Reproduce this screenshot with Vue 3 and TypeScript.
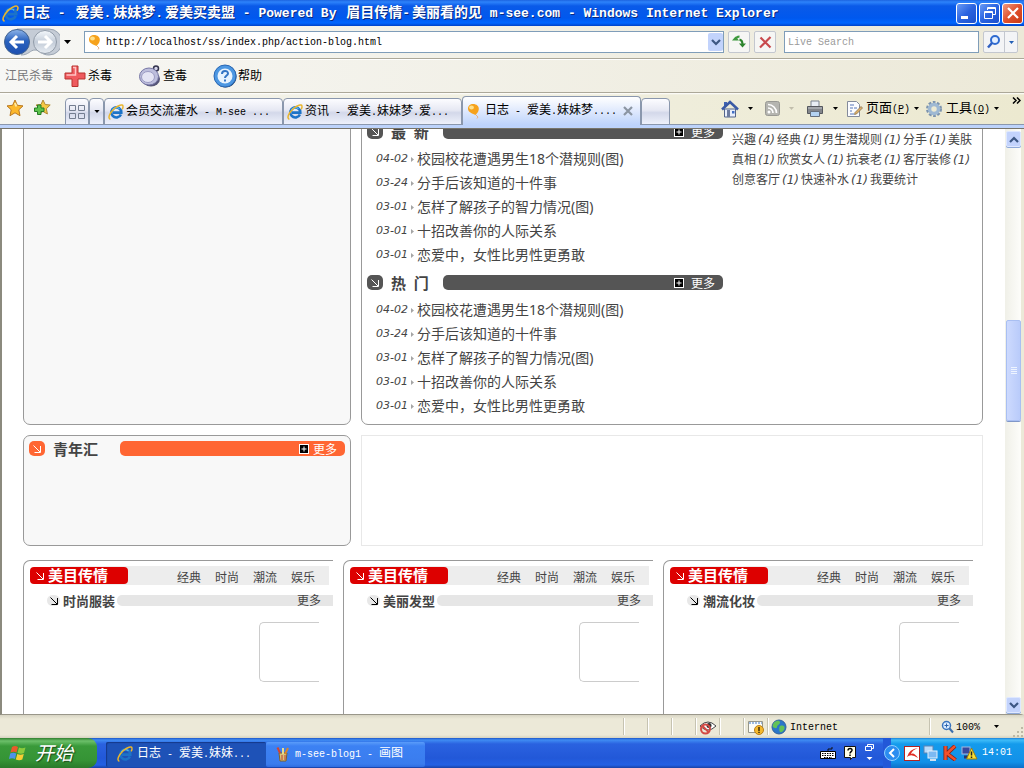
<script setup lang="ts">
import { h, ref } from 'vue'

// Splits mixed text so that Latin runs get their own monospaced face.
const Mixed = (props: { text: string }) =>
  props.text
    .split(/([\x20-\x7e]+)/)
    .filter((part) => part.length > 0)
    .map((part) => (/^[\x20-\x7e]/.test(part) ? h('span', { class: 'latin' }, part) : part))
Mixed.props = ['text']

interface Post {
  date: string
  title: string
}
interface Tag {
  name: string
  count?: number
}

const address = ref('http://localhost/ss/index.php/action-blog.html')
const query = ref('')
const title = '日志 - 爱美.妹妹梦.爱美买卖盟 - Powered By 眉目传情-美丽看的见 m-see.com - Windows Internet Explorer'

const posts: Post[] = [
  { date: '04-02', title: '校园校花遭遇男生18个潜规则(图)' },
  { date: '03-24', title: '分手后该知道的十件事' },
  { date: '03-01', title: '怎样了解孩子的智力情况(图)' },
  { date: '03-01', title: '十招改善你的人际关系' },
  { date: '03-01', title: '恋爱中，女性比男性更勇敢' },
]
const sections = [
  { name: '最  新', posts },
  { name: '热  门', posts },
]
const tags: Tag[] = [
  { name: '兴趣', count: 4 },
  { name: '经典', count: 1 },
  { name: '男生潜规则', count: 1 },
  { name: '分手', count: 1 },
  { name: '美肤真相', count: 1 },
  { name: '欣赏女人', count: 1 },
  { name: '抗衰老', count: 1 },
  { name: '客厅装修', count: 1 },
  { name: '创意客厅', count: 1 },
  { name: '快速补水', count: 1 },
  { name: '我要统计' },
]
const cards = ['时尚服装', '美丽发型', '潮流化妆']
const links = ['经典', '时尚', '潮流', '娱乐']
</script>

<template>
  <div class="window">
    <svg class="defs" width="0" height="0" aria-hidden="true">
      <defs>
        <linearGradient id="blueBall" x1="0" y1="0" x2="0" y2="1">
          <stop offset="0" stop-color="#8fb6ea" />
          <stop offset=".45" stop-color="#2a62be" />
          <stop offset="1" stop-color="#1d4fb0" />
        </linearGradient>
        <linearGradient id="greyBall" x1="0" y1="0" x2="0" y2="1">
          <stop offset="0" stop-color="#f4f8fc" />
          <stop offset=".5" stop-color="#c3ccd8" />
          <stop offset="1" stop-color="#e8edf3" />
        </linearGradient>
      </defs>
      <symbol id="ie" viewBox="0 0 16 16">
        <path d="M12.9 10.4A5 5 0 1 1 13.3 8.6H5" fill="none" stroke="#1c73c8" stroke-width="2.6" />
        <path d="M4.2 6.2A4.6 4.6 0 0 1 11.5 4.9" fill="none" stroke="#58b4f0" stroke-width="1.2" />
        <path d="M2.4 15.2C-.6 14.6 1.5 9 6.2 4.8 10.4 1.1 14.6-.2 15 2.2c.2 1-.3 2.200-.9 3.100" fill="none" stroke="#e9b52d" stroke-width="1.5" />
      </symbol>
      <symbol id="balloon" viewBox="0 0 14 16">
        <path d="M6 1c3.600 0 6 2.200 5.800 5.200C11.600 9 9.500 10.500 8.500 12 6 11 1 9.500 1 5.800 1 3 3.200 1 6 1z" fill="#f6a21c" />
        <ellipse cx="4.500" cy="4.500" rx="2.400" ry="2" fill="#ffe08a" />
        <path d="M9 12l2 2-1 1.500" stroke="#e7b183" fill="none" />
      </symbol>
      <symbol id="down" viewBox="0 0 7 4"><path d="M0 0h7L3.500 4z" fill="currentColor" /></symbol>
      <symbol id="diag" viewBox="0 0 8 8"><path d="M.5.5l6.500 6.500M7.500 1v6.500H1.500" fill="none" stroke="currentColor" /></symbol>
      <symbol id="chev" viewBox="0 0 10 7"><path d="M1 1l4 4 4-4" fill="none" stroke="#3d5783" stroke-width="2.200" /></symbol>
      <symbol id="plus" viewBox="0 0 10 10">
        <rect x=".5" y=".5" width="9" height="9" fill="#000" stroke="#fff" />
        <path d="M5 2.500v5M2.500 5h5" stroke="#fff" />
      </symbol>
    </svg>

    <header class="titlebar">
      <svg width="17" height="17"><use href="#ie" /></svg>
      <h1><Mixed :text="title" /></h1>
      <div class="winbtns">
        <button aria-label="Minimize"><svg width="18" height="18"><path d="M3 13.500h7" stroke="#fff" stroke-width="3" /></svg></button>
        <button aria-label="Restore">
          <svg width="18" height="18"><path d="M6.500 6V3.500h8v7H12M6 4.500h9M3.500 7.500h8v7h-8zM3 8.500h9" fill="none" stroke="#fff" /></svg>
        </button>
        <button class="close" aria-label="Close"><svg width="18" height="18"><path d="M4 4l10 10M14 4L4 14" stroke="#fff" stroke-width="2.200" /></svg></button>
      </div>
    </header>

    <div class="nav">
      <button class="backfwd" aria-label="Back and forward">
        <svg width="56" height="28">
          <path d="M13 1h32a13 13 0 0 1 0 26c-8 0-9-5-14-5s-6 5-14 5" fill="#c5ccd6" stroke="#9ba5b2" />
          <circle cx="13" cy="14" r="12.500" fill="url(#blueBall)" stroke="#40618f" />
          <path d="M20 14H8M13 8l-6 6 6 6" fill="none" stroke="#fff" stroke-width="3" />
          <circle cx="41" cy="14" r="11.500" fill="url(#greyBall)" stroke="#919ba8" />
          <path d="M34 14h12M41 8l6 6-6 6" fill="none" stroke="#fff" stroke-width="3" />
        </svg>
      </button>
      <button class="hist" aria-label="Recent pages"><svg width="7" height="4"><use href="#down" /></svg></button>
      <div class="address">
        <svg width="14" height="16"><use href="#balloon" /></svg>
        <input v-model="address" type="text" aria-label="Address" />
        <button aria-label="Show addresses"><svg width="10" height="7"><use href="#chev" /></svg></button>
      </div>
      <button class="sq" aria-label="Refresh">
        <svg width="16" height="16"><path d="M4.500 11V5" stroke="#3f9a3f" stroke-width="0" /><path d="M1 6.500h7L4.500 2.500z" fill="#3f9a3f" /><path d="M4.500 6C5 3.500 6.500 2.500 8.500 2.500" fill="none" stroke="#3f9a3f" stroke-width="2" /><path d="M8 9.500h7l-3.500 4z" fill="#2c842c" /><path d="M11.500 10c0-2.500-1-4-3-4.500" fill="none" stroke="#2c842c" stroke-width="2" /></svg>
      </button>
      <button class="sq" aria-label="Stop"><svg width="16" height="16"><path d="M3.500 3.500l10 10M13.500 3L3 13.500" stroke="#c8494d" stroke-width="2.200" /></svg></button>
      <input v-model="query" class="search" type="text" placeholder="Live Search" aria-label="Live Search" />
      <div class="go">
        <button aria-label="Search"><svg width="16" height="16"><circle cx="9" cy="6" r="4" fill="#e5f0ff" stroke="#2f6bd0" stroke-width="2" /><path d="M6 9l-4 4.500" stroke="#2f5fc0" stroke-width="2.500" /></svg></button>
        <button class="narrow" aria-label="Search options"><svg width="5" height="3" color="#225fb5"><use href="#down" /></svg></button>
      </div>
    </div>

    <div class="antivirus">
      <span class="brand">江民杀毒</span>
      <button class="av">
        <svg width="24" height="24"><path d="M9 2h6v7h7v6h-7v7.500H9V15H2V9h7z" fill="#ee5a5e" stroke="#b8322f" /><path d="M10 3.500h2.500V11H3.500" fill="none" stroke="#ffc3c3" stroke-width="1.500" /></svg>杀毒
      </button>
      <button class="av">
        <svg width="24" height="24"><ellipse cx="13" cy="15" rx="9" ry="7.500" fill="#555577" /><circle cx="18" cy="4.500" r="2.500" fill="#d5d5ea" stroke="#33334d" stroke-width="1.500" /><ellipse cx="11" cy="12.500" rx="9.500" ry="8.500" fill="#bdbedc" stroke="#7676a5" /><ellipse cx="10" cy="13" rx="6.500" ry="5.500" fill="#e4e4f4" stroke="#9c9cc4" /></svg>查毒
      </button>
      <button class="av">
        <svg width="24" height="24"><circle cx="12.500" cy="12.500" r="11" fill="#17345d" /><circle cx="12" cy="12" r="11" fill="#4c97e2" stroke="#2a68b5" /><circle cx="12" cy="12" r="7.500" fill="#e7f3ff" /><path d="M9 10c0-4 6-4 6-.5 0 2-3 2-3 4.500M12 15.500v2" fill="none" stroke="#3475c5" stroke-width="2" /></svg>帮助
      </button>
    </div>

    <div class="tabrow">
      <button class="star" aria-label="Favorites"><svg width="18" height="18"><path d="M9 1l2.400 5.300 5.600.6-4.200 3.900 1.200 5.900L9 13.800l-5 2.900 1.200-5.900L1 6.900l5.600-.6z" fill="#fcb82c" stroke="#b97820" /><path d="M9 4l1.300 3.500" stroke="#ffe9a0" stroke-width="2" /></svg></button>
      <button class="star" aria-label="Add favorite"><svg width="18" height="18"><path d="M10 1l2.200 4.500 5 .5-3.800 3.700 1 5.300-4.400-2.500-4.500 2.500 1-5.300L3 6l5-.5z" fill="#f6c843" stroke="#b08a35" /><path d="M4.500 6h3.500v3h3v3.500H8v3H4.500v-3h-3V9h3z" fill="#5cc34c" stroke="#267c25" /></svg></button>
      <div class="tabs">
        <button class="tab quick" aria-label="Quick tabs"><svg width="16" height="14"><path d="M.5.5h6v5h-6zM9.500.5h6v5h-6zM.5 8.500h6v5h-6zM9.500 8.500h6v5h-6z" fill="none" stroke="#737d90" /></svg></button>
        <button class="tab list" aria-label="Tab list"><svg width="6" height="3"><use href="#down" /></svg></button>
        <button class="tab page"><svg width="16" height="16"><use href="#ie" /></svg><span><Mixed text="会员交流灌水 - M-see ..." /></span></button>
        <button class="tab page"><svg width="16" height="16"><use href="#ie" /></svg><span><Mixed text="资讯 - 爱美.妹妹梦.爱..." /></span></button>
        <button class="tab page active">
          <svg width="14" height="16"><use href="#balloon" /></svg><span><Mixed text="日志 - 爱美.妹妹梦...." /></span>
          <svg class="x" width="10" height="10"><path d="M1 1l8 8M9 1L1 9" stroke="#8b95a2" stroke-width="2.200" /></svg>
        </button>
        <button class="tab new" aria-label="New tab"></button>
      </div>
      <div class="tools">
        <button aria-label="Home"><svg width="18" height="18"><path d="M3.500 9h11v8h-11z" fill="#e8eefb" stroke="#53648b" /><path d="M3 2h3v4H3z" fill="#4164b2" /><path d="M1 9.500L9 2l8 7.500" fill="none" stroke="#3a5aa5" stroke-width="2.500" /><path d="M6 10h3v7H6z" fill="#6c7b9f" /><path d="M11 11h2.500v2.500H11z" fill="#416ec4" /></svg></button>
        <svg class="dd" width="5" height="3"><use href="#down" /></svg>
        <button class="rss" aria-label="Feeds"><svg width="15" height="15"><rect x=".5" y=".5" width="14" height="14" rx="2" fill="#b5b5b0" stroke="#999994" /><circle cx="4" cy="11" r="1.500" fill="#fff" /><path d="M3 7a5 5 0 0 1 5 5M3 3.500A8.500 8.500 0 0 1 11.500 12" fill="none" stroke="#fff" stroke-width="1.700" /></svg></button>
        <svg class="dd dim" width="5" height="3"><use href="#down" /></svg>
        <button class="print" aria-label="Print"><svg width="18" height="18"><path d="M5 1h8v6H5z" fill="#e9eef5" stroke="#7b8290" /><path d="M1.500 6.500h15v7h-15z" fill="#83868c" stroke="#55585e" /><path d="M2 8h14" stroke="#c4c7cc" /><path d="M4.500 11.500h9v5h-9z" fill="#b4d3f2" stroke="#66707e" /></svg></button>
        <svg class="dd" width="5" height="3"><use href="#down" /></svg>
        <button class="word"><svg width="17" height="18"><path d="M1.500 1.500h9l3 3v12h-12z" fill="#fbfcff" stroke="#848b9b" /><path d="M4 5h4M4 8h3M4 11h2M8 8h3M4 14h4" stroke="#5777b8" /><path d="M9 12.500L15 6.500l1.500 1.500L10.500 14l-2 .5z" fill="#dfb068" stroke="#7b6746" stroke-width=".7" /></svg><span>页面<span class="latin">(<u>P</u>)</span></span></button>
        <svg class="dd" width="5" height="3"><use href="#down" /></svg>
        <button class="word gear"><svg width="17" height="18"><circle cx="8" cy="9" r="6.500" fill="none" stroke="#7c93ad" stroke-width="3" stroke-dasharray="2.600 1.500" /><circle cx="8" cy="9" r="4.500" fill="none" stroke="#9fb9d3" stroke-width="3.500" /></svg><span>工具<span class="latin">(<u>O</u>)</span></span></button>
        <svg class="dd" width="5" height="3"><use href="#down" /></svg>
        <button class="more" aria-label="More commands"><svg width="9" height="7"><path d="M1 .5l3 3-3 3M5 .5l3 3-3 3" fill="none" stroke="#000" stroke-width="1.500" /></svg></button>
      </div>
    </div>

    <div class="view">
      <main class="page-body">
        <div class="row top">
          <section class="panel soft"></section>
          <section class="panel main">
            <div class="lists">
              <template v-for="s in sections" :key="s.name">
                <div class="head">
                  <span class="badge"><svg width="8" height="8"><use href="#diag" /></svg></span>
                  <h2>{{ s.name }}</h2>
                  <div class="bar"><svg width="10" height="10"><use href="#plus" /></svg><a href="#">更多</a></div>
                </div>
                <ul>
                  <li v-for="p in s.posts" :key="p.title">
                    <i>{{ p.date }}</i><svg width="3" height="5"><path d="M0 0l3 2.500L0 5z" fill="#a5a5a5" /></svg><a href="#">{{ p.title }}</a>
                  </li>
                </ul>
              </template>
            </div>
            <p class="tags"><template v-for="t in tags" :key="t.name"><a href="#">{{ t.name }}</a><em v-if="t.count">({{ t.count }})</em></template></p>
          </section>
        </div>

        <div class="row youth">
          <section class="panel soft">
            <div class="head orange">
              <span class="badge"><svg width="8" height="8"><use href="#diag" /></svg></span>
              <h2>青年汇</h2>
              <div class="bar"><svg width="10" height="10"><use href="#plus" /></svg><a href="#">更多</a></div>
            </div>
          </section>
          <section class="blank"></section>
        </div>

        <div class="cards">
          <section v-for="c in cards" :key="c" class="card">
            <div class="chead">
              <h2><svg width="8" height="8"><use href="#diag" /></svg>美目传情</h2>
              <nav><a v-for="l in links" :key="l" href="#">{{ l }}</a></nav>
            </div>
            <div class="sub">
              <span class="dot"><svg width="8" height="8"><use href="#diag" /></svg></span>
              <h3>{{ c }}</h3>
              <div class="strip"><a href="#">更多</a></div>
            </div>
            <div class="thumbbox"></div>
          </section>
        </div>
      </main>
      <div class="scroll">
        <button aria-label="Scroll up"><svg class="flip" width="10" height="7"><use href="#chev" /></svg></button>
        <div class="above"></div>
        <div class="grab"><svg width="6" height="8"><path d="M0 .5h6M0 2.500h6M0 4.500h6M0 6.500h6" stroke="#eef4ff" /></svg></div>
        <div class="below"></div>
        <button aria-label="Scroll down"><svg width="10" height="7"><use href="#chev" /></svg></button>
      </div>
    </div>

    <footer class="status">
      <span class="cell"></span><span class="cell"></span><span class="cell"></span>
      <span class="cell"><svg width="18" height="16"><path d="M1 7q8-8 16 0-8 8-16 0z" fill="#fff" stroke="#444" /><circle cx="10" cy="6.500" r="2.500" fill="#333" /><circle cx="6.500" cy="10" r="4.500" fill="none" stroke="#d44a45" stroke-width="2" /><path d="M3.500 7l6 6" stroke="#d44a45" stroke-width="2" /></svg></span>
      <span class="cell"></span>
      <span class="cell"><svg width="16" height="16"><path d="M.5 2.500h14v11H.5z" fill="#fdfdf8" stroke="#97978b" /><path d="M1 4h13" stroke="#9ebbe2" stroke-width="2" stroke-dasharray="2 1" /><circle cx="11" cy="11" r="4.500" fill="#f4b92d" stroke="#bb7f18" /><path d="M11 8v4M11 12.800V14" stroke="#3f2a05" stroke-width="1.500" /></svg></span>
      <span class="cell zone"><svg width="16" height="16"><circle cx="8" cy="8" r="7" fill="#2b76c9" stroke="#31639b" /><path d="M3 3.500C6 1 9 1.500 9 3.500S6 6 6 8s-3 1-4 0 0-3 1-4.500zM9 7c3-1 5 0 4.500 2.500S10 14 9 13s-1-5 0-6z" fill="#64c257" /></svg><span class="latin">Internet</span></span>
      <span class="cell zoomlevel"><svg width="13" height="14"><circle cx="5.500" cy="5.500" r="4" fill="#d9ebff" stroke="#3a74bd" stroke-width="1.500" /><path d="M3.500 5.500h4M5.500 3.500v4" stroke="#2d65af" /><path d="M8.500 8.500l3.500 4" stroke="#3b6ead" stroke-width="2" /></svg><span class="latin">100%</span><svg class="tri" width="5" height="3"><use href="#down" /></svg></span>
      <svg class="grip" width="12" height="12"><path d="M9 1h2v2H9zM9 5h2v2H9zM5 5h2v2H5zM9 9h2v2H9zM5 9h2v2H5zM1 9h2v2H1z" fill="#bdb9a5" /></svg>
    </footer>

    <div class="taskbar">
      <button class="start">
        <svg width="19" height="18"><path d="M3 3q3-2 6 0L7.500 8.500Q5 7 1.500 8.500z" fill="#ea5a2b" /><path d="M10 3.500q3 1.500 6.500 0L15 9q-3 1.500-6.500 0z" fill="#8bcb3c" /><path d="M1.200 9.500q3-1.500 6 0L6 15q-3-1.700-6 0z" fill="#4f93ea" /><path d="M8.300 10q3 1.500 6.500 0l-1.500 5.500q-3 1.500-6.500 0z" fill="#f8ce34" /></svg>开始
      </button>
      <button class="task on"><svg width="16" height="16"><use href="#ie" /></svg><span><Mixed text="日志 - 爱美.妹妹..." /></span></button>
      <button class="task"><svg width="16" height="16"><path d="M4 7h8l-1 8H5z" fill="#d9c37a" stroke="#7e5f2a" /><path d="M5 7L2.500 1.500" stroke="#d44332" stroke-width="2" /><path d="M8 8V2" stroke="#e6dc8f" stroke-width="2" /><path d="M10 8l3-6" stroke="#d7852b" stroke-width="2" /><path d="M7 9v5M10 9v5" stroke="#bf3a32" /></svg><span><Mixed text="m-see-blog1 - 画图" /></span></button>
      <div class="lang">
        <svg width="16" height="12"><path d="M.5 4.500h15v7H.5z" fill="#fff" stroke="#000" /><path d="M2 6.500h12M2 8.500h12M4 10.500h8" stroke="#000" stroke-dasharray="1.500 1" /><path d="M8 4V2h4V0" fill="none" stroke="#111" /></svg>
        <svg width="13" height="14"><path d="M.5.500h11v11h-3l-2 2v-2h-6z" fill="#ffffe8" stroke="#111" /><path d="M4 4.500c0-3 4.500-2.500 4 0-.2 1.200-2 1.300-2 3M6 8.500V10" fill="none" stroke="#000" stroke-width="1.500" /></svg>
        <svg width="9" height="18"><path d="M2.500 2V.5h6v4H7M.5 2.500h6v4h-6z" fill="none" stroke="#fff" /><path d="M1.500 13h6l-3 3z" fill="#fff" /></svg>
      </div>
      <div class="tray">
        <button class="expand" aria-label="Show hidden icons"><svg width="16" height="18"><circle cx="8" cy="9" r="7.500" fill="#2b8df0" stroke="#8fd0ff" /><path d="M10 5L6 9l4 4" fill="none" stroke="#fff" stroke-width="2" /></svg></button>
        <svg width="16" height="15"><rect x=".5" y=".5" width="15" height="14" fill="#fff" stroke="#b32320" /><path d="M14 2Q5 3 3 11q4-4 11 1-4-6-7-4 1-4 7-6z" fill="#e02b22" /></svg>
        <svg width="16" height="16"><rect x="1" y="1" width="9" height="7" fill="#b9dbfa" stroke="#5c84b4" /><rect x="5" y="6" width="9" height="7" fill="#7cb9f2" stroke="#e3f1fd" /><path d="M7 15h6" stroke="#cfe0f0" stroke-width="2" /></svg>
        <svg width="16" height="16"><path d="M3.500 1v14M13 1L5 8.500l8.500 6.500" fill="none" stroke="#861c10" stroke-width="4" /><path d="M3.500 1v14M13 1L5 8.500l8.500 6.500" fill="none" stroke="#f2502c" stroke-width="2.500" /></svg>
        <svg width="17" height="16"><rect x="1" y="2" width="8" height="7" fill="#37479d" stroke="#a5b8dd" /><path d="M3 12h7" stroke="#27356b" stroke-width="3" /><path d="M10.500 3l5.500 11H5.500z" fill="#f9df35" stroke="#967c13" /><path d="M10.500 6.500v4M10.500 11.500v1.500" stroke="#222" stroke-width="1.500" /></svg>
        <time>14:01</time>
      </div>
    </div>
  </div>
</template>

<style>
html,
body {
  margin: 0;
}
.latin {
  font-family: 'Liberation Mono', monospace;
  font-size: 10px;
  white-space: pre;
}
</style>

<style scoped>
.window {
  height: 100vh;
  display: flex;
  flex-direction: column;
  overflow: hidden;
  background: #ece9d8;
  color: #000;
  font: 12px/16px 'Noto Sans', 'Noto Sans CJK SC', sans-serif;
}
.window * {
  box-sizing: border-box;
}
.defs {
  position: absolute;
}
svg {
  display: block;
  flex: none;
}
button {
  margin: 0;
  padding: 0;
  border: 0;
  background: none;
  color: inherit;
  font: inherit;
  display: flex;
  align-items: center;
  justify-content: center;
  flex: none;
}
input {
  min-width: 0;
  margin: 0;
  padding: 0;
  border: 0;
  outline: 0;
  border-radius: 0;
  background: #fff;
  color: #000;
  font: 10px/16px 'Liberation Mono', monospace;
}
h1,
h2,
h3,
p,
ul {
  margin: 0;
  padding: 0;
  font-weight: normal;
}
ul {
  list-style: none;
}
a {
  color: inherit;
  text-decoration: none;
}

/* title bar */
.titlebar {
  flex: none;
  height: 26px;
  padding: 0 1px 0 2px;
  display: flex;
  align-items: center;
  gap: 3px;
  background: linear-gradient(#1c64e0, #2d83fb 2px, #0a5ae8 6px, #0058ee 18px, #0066ff 23px, #0042c8);
}
.titlebar h1 {
  flex: 1;
  color: #fff;
  font-size: 14px;
  font-weight: bold;
  line-height: 24px;
  white-space: nowrap;
  text-shadow: 1px 1px #0a2a80;
}
.titlebar h1 :deep(.latin) {
  margin-right: 2px;
  font-size: 13px;
}
.winbtns {
  display: flex;
  gap: 2px;
}
.winbtns button {
  width: 21px;
  height: 21px;
  border: 1px solid #fff;
  border-radius: 3px;
  background: linear-gradient(135deg, #6a9bf6, #2a63e0 50%, #1c50cc);
}
.winbtns .close {
  background: linear-gradient(135deg, #f09a80, #e0502c 50%, #c83a14);
}

/* address row */
.nav {
  flex: none;
  height: 33px;
  padding: 0 6px 0 4px;
  display: flex;
  align-items: center;
  background: linear-gradient(90deg, #f7f7f5, #ece9d8);
  border-bottom: 1px solid #aca899;
}
.hist {
  width: 14px;
  margin-right: 10px;
}
.address {
  flex: 1;
  height: 22px;
  margin-right: 4px;
  padding-left: 3px;
  display: flex;
  align-items: center;
  gap: 4px;
  background: #fff;
  border: 1px solid #7f9db9;
}
.address input {
  flex: 1;
  padding-top: 2px;
}
.address button {
  width: 15px;
  height: 18px;
  border-radius: 2px;
  background: #c2d3fc;
}
.sq {
  width: 22px;
  height: 22px;
  margin-right: 4px;
  border: 1px solid #c3c7cf;
  border-radius: 2px;
  background: #f6f6f4;
}
.search {
  width: 195px;
  height: 22px;
  margin: 0 4px;
  padding: 0 3px;
  border: 1px solid #7f9db9;
}
.search::placeholder {
  color: #9a9a9a;
  opacity: 1;
}
.go {
  height: 22px;
  display: flex;
  border: 1px solid #c3c7cf;
  border-radius: 2px;
  background: #f3f4f6;
}
.go button {
  width: 20px;
}
.go .narrow {
  width: 13px;
  border-left: 1px solid #c3c7cf;
}

/* antivirus toolbar */
.antivirus {
  flex: none;
  height: 34px;
  padding-left: 5px;
  display: flex;
  align-items: center;
  background: linear-gradient(90deg, #f7f7f5, #ece9d8);
  border-top: 1px solid #fff;
  border-bottom: 1px solid #aca899;
}
.brand {
  width: 58px;
  color: #77777a;
}
.av {
  margin-right: 26px;
  gap: 1px;
}

/* tabs */
.tabrow {
  flex: none;
  height: 36px;
  display: flex;
  align-items: flex-end;
  background: linear-gradient(#fff, transparent 2px), linear-gradient(90deg, #f5f5f0, #ece9d0);
  border-bottom: 1px solid #77746a;
  box-shadow: inset 0 -3px #bdd3fb, inset 0 -4px #8a97ad;
}
.star {
  height: 35px;
  width: 27px;
  padding: 0 0 6px 2px;
}
.tabs {
  display: flex;
  align-items: flex-end;
  margin-left: 11px;
  padding-bottom: 3px;
}
.tab {
  height: 27px;
  border: 1px solid #8a97ad;
  border-radius: 4px 4px 0 0;
  background: linear-gradient(#fcfcff, #e6e8f3 45%, #d3d8ea 55%, #eef1fb);
}
.quick {
  width: 24px;
}
.list {
  width: 15px;
}
.page {
  width: 179px;
  padding-left: 3px;
  gap: 2px;
  justify-content: flex-start;
  white-space: nowrap;
}
.page.active {
  height: 29px;
  padding-left: 4px;
  gap: 4px;
  border-bottom: 0;
  background: linear-gradient(#fff, #dfe9fd 50%, #bdd3fb);
}
.page .x {
  margin: 0 7px 0 auto;
}
.new {
  width: 29px;
}
.tools {
  flex: 1;
  height: 35px;
  display: flex;
  align-items: center;
  justify-content: flex-end;
  padding: 0 3px 4px 0;
}
.dd {
  margin-left: 9px;
}
.dim {
  color: #c2beac;
}
.rss {
  margin-left: 12px;
}
.print {
  margin-left: 12px;
}
.word {
  gap: 3px;
  font-size: 13px;
  margin-left: 8px;
}
.word + .dd {
  margin-left: 4px;
}
.gear {
  margin-left: 7px;
}
.more {
  align-self: flex-start;
  margin: 4px 0 0 13px;
}

/* document area */
.view {
  flex: 1;
  min-height: 0;
  display: flex;
  overflow: hidden;
  background: #fff;
  border-left: 2px solid #8b8a7e;
  border-right: 3px solid #ece9d8;
  border-bottom: 1px solid #9a978a;
}
.page-body {
  flex: 1;
  min-width: 0;
  margin-top: -19px;
  padding: 0 22px 0 21px;
  color: #444;
}
.row {
  display: grid;
  grid-template-columns: 328fr 622fr;
  gap: 10px;
}
.panel {
  border: 1px solid #999;
  border-radius: 7px;
}
.soft {
  background: #f8f8f8;
}
.main {
  display: grid;
  grid-template-columns: 356fr 244fr;
  gap: 9px;
  padding: 5px 6px 6px 5px;
}
.head {
  height: 31px;
  display: flex;
  align-items: center;
}
.badge {
  width: 16px;
  height: 15px;
  display: flex;
  align-items: center;
  justify-content: center;
  border-radius: 5px;
  background: #555;
  color: #fff;
}
.head h2 {
  width: 60px;
  padding-left: 8px;
  font-size: 15px;
  font-weight: bold;
  white-space: pre;
}
.bar {
  flex: 1;
  height: 15px;
  padding-right: 8px;
  display: flex;
  align-items: center;
  justify-content: flex-end;
  gap: 4px;
  overflow: hidden;
  border-radius: 5px;
  background: #555;
  color: #fff;
}
.bar a {
  padding-top: 2px;
}
.orange {
  height: 25px;
  padding: 0 5px;
}
.orange h2 {
  width: 75px;
}
.orange .badge,
.orange .bar {
  background: #f63;
}
.lists li {
  height: 24px;
  padding-left: 9px;
  display: flex;
  align-items: center;
  font-size: 14px;
  line-height: 24px;
}
.lists i {
  width: 35px;
  font-family: 'DejaVu Sans', sans-serif;
  font-size: 11px;
}
.lists svg + a {
  margin-left: 3px;
}
.tags {
  padding-top: 14px;
  line-height: 20px;
}
.tags em {
  padding: 0 2px;
  font-family: 'DejaVu Sans', sans-serif;
  line-height: 16px;
}
.youth {
  margin-top: 10px;
}
.youth .panel {
  height: 111px;
}
.blank {
  border: 1px solid #e8e8e8;
}
.cards {
  margin-top: 14px;
  display: grid;
  grid-template-columns: repeat(3, 1fr);
}
.card {
  height: 200px;
  margin-right: 10px;
  padding: 5px 0 0 6px;
  border: solid #999;
  border-width: 1px 0 0 1px;
  border-top-left-radius: 7px;
}
.chead {
  height: 19px;
  margin-right: 4px;
  display: flex;
  align-items: center;
  background: linear-gradient(90deg, transparent 20px, #ededed 20px);
}
.chead h2 {
  width: 98px;
  height: 17px;
  padding-left: 6px;
  display: flex;
  align-items: center;
  gap: 4px;
  border-radius: 4px;
  background: #d00;
  color: #fff;
  font-size: 15px;
  font-weight: bold;
  line-height: 17px;
}
.chead nav {
  flex: 1;
  display: flex;
  justify-content: flex-end;
  gap: 14px;
  padding: 4px 14px 0 0;
}
.sub {
  height: 11px;
  margin-top: 10px;
  padding-left: 17px;
  display: flex;
  align-items: center;
}
.dot {
  width: 13px;
  height: 11px;
  padding-left: 3px;
  border-radius: 6px;
  background: #e8e8e8;
  color: #000;
}
.dot svg {
  margin-top: 2px;
}
.sub h3 {
  padding: 0 2px 0 3px;
  font-size: 13px;
  font-weight: bold;
}
.strip {
  flex: 1;
  height: 11px;
  padding-right: 12px;
  display: flex;
  align-items: center;
  justify-content: flex-end;
  border-radius: 5px 0 0 5px;
  background: #e6e6e6;
}
.thumbbox {
  width: 60px;
  height: 60px;
  margin: 16px 14px 0 auto;
  border: 1px solid #ccc;
  border-right: 0;
  border-radius: 5px 0 0 5px;
}

/* scroll bar */
.scroll {
  flex: none;
  width: 16px;
  padding: 2px 0 1px 1px;
  display: flex;
  flex-direction: column;
  background: linear-gradient(90deg, #f0f0e8, #fdfdfa);
}
.scroll button {
  height: 16px;
  border: 1px solid #dfe8ff;
  border-radius: 2px;
  background: #c3d3fc;
  box-shadow: 0 1px #8fa9d8;
}
.flip {
  transform: rotate(180deg);
}
.above {
  flex: 174;
}
.below {
  flex: 277;
}
.grab {
  flex: 99;
  display: flex;
  align-items: center;
  justify-content: center;
  border: 1px solid #a9bff2;
  border-radius: 2px;
  background: linear-gradient(90deg, #cddafe, #b9cbfa);
  box-shadow: 0 1px #8097c8;
}

/* status bar */
.status {
  flex: none;
  height: 23px;
  display: flex;
  align-items: center;
  justify-content: flex-end;
  background: linear-gradient(#d8d5c4, #ece9d8 4px, #ece9d8 20px, #d5d2c0);
}
.cell {
  width: 24px;
  height: 17px;
  display: flex;
  align-items: center;
  justify-content: center;
  border-left: 1px solid #c6c3b1;
  box-shadow: inset 1px 0 #fff;
}
.cell .latin {
  padding-top: 3px;
}
.zone {
  width: 162px;
  padding-left: 3px;
  gap: 3px;
  justify-content: flex-start;
}
.zoomlevel {
  width: 83px;
  padding-left: 11px;
  gap: 2px;
  justify-content: flex-start;
}
.tri {
  margin-left: 12px;
}
.grip {
  align-self: flex-end;
}

/* task bar */
.taskbar {
  flex: none;
  height: 30px;
  display: flex;
  align-items: center;
  background: linear-gradient(#1c55c8, #3f8cf3 2px, #2a62e0 6px, #2258d8 20px, #2360e4 27px, #1941a5);
  color: #fff;
}
.start {
  width: 97px;
  height: 30px;
  margin-right: 9px;
  padding-left: 9px;
  gap: 7px;
  justify-content: flex-start;
  border-radius: 0 9px 9px 0;
  background: linear-gradient(#2f7f2f, #6cc06a 3px, #3a9a3a 8px, #359435 22px, #2a7a2a);
  font-size: 19px;
  font-style: italic;
  text-shadow: 1px 1px 1px #1b4a1b;
}
.task {
  width: 159px;
  height: 25px;
  margin: 2px 0 0;
  padding-left: 9px;
  gap: 4px;
  justify-content: flex-start;
  border-radius: 2px;
  background: linear-gradient(#5a9cfa, #3c81f3 4px, #3a7cee 22px, #2f6ce0);
  white-space: nowrap;
}
.task.on {
  width: 160px;
  padding-left: 11px;
  background: #1e52b7;
  box-shadow: inset 1px 1px 1px #14398a;
}
.lang {
  margin-left: auto;
  padding-right: 9px;
  display: flex;
  align-items: center;
  gap: 8px;
}
.tray {
  height: 30px;
  padding-right: 12px;
  display: flex;
  align-items: center;
  gap: 3px;
  background: linear-gradient(90deg, #2258d8 8px, transparent 8px), linear-gradient(#1b7fd8, #3fbcf8 2px, #149bec 6px, #1290e8 24px, #0d6fc8);
}
.expand {
  margin: 0 1px;
}
.tray time {
  padding-left: 1px;
  font: 10px/16px 'Liberation Mono', monospace;
}
</style>
